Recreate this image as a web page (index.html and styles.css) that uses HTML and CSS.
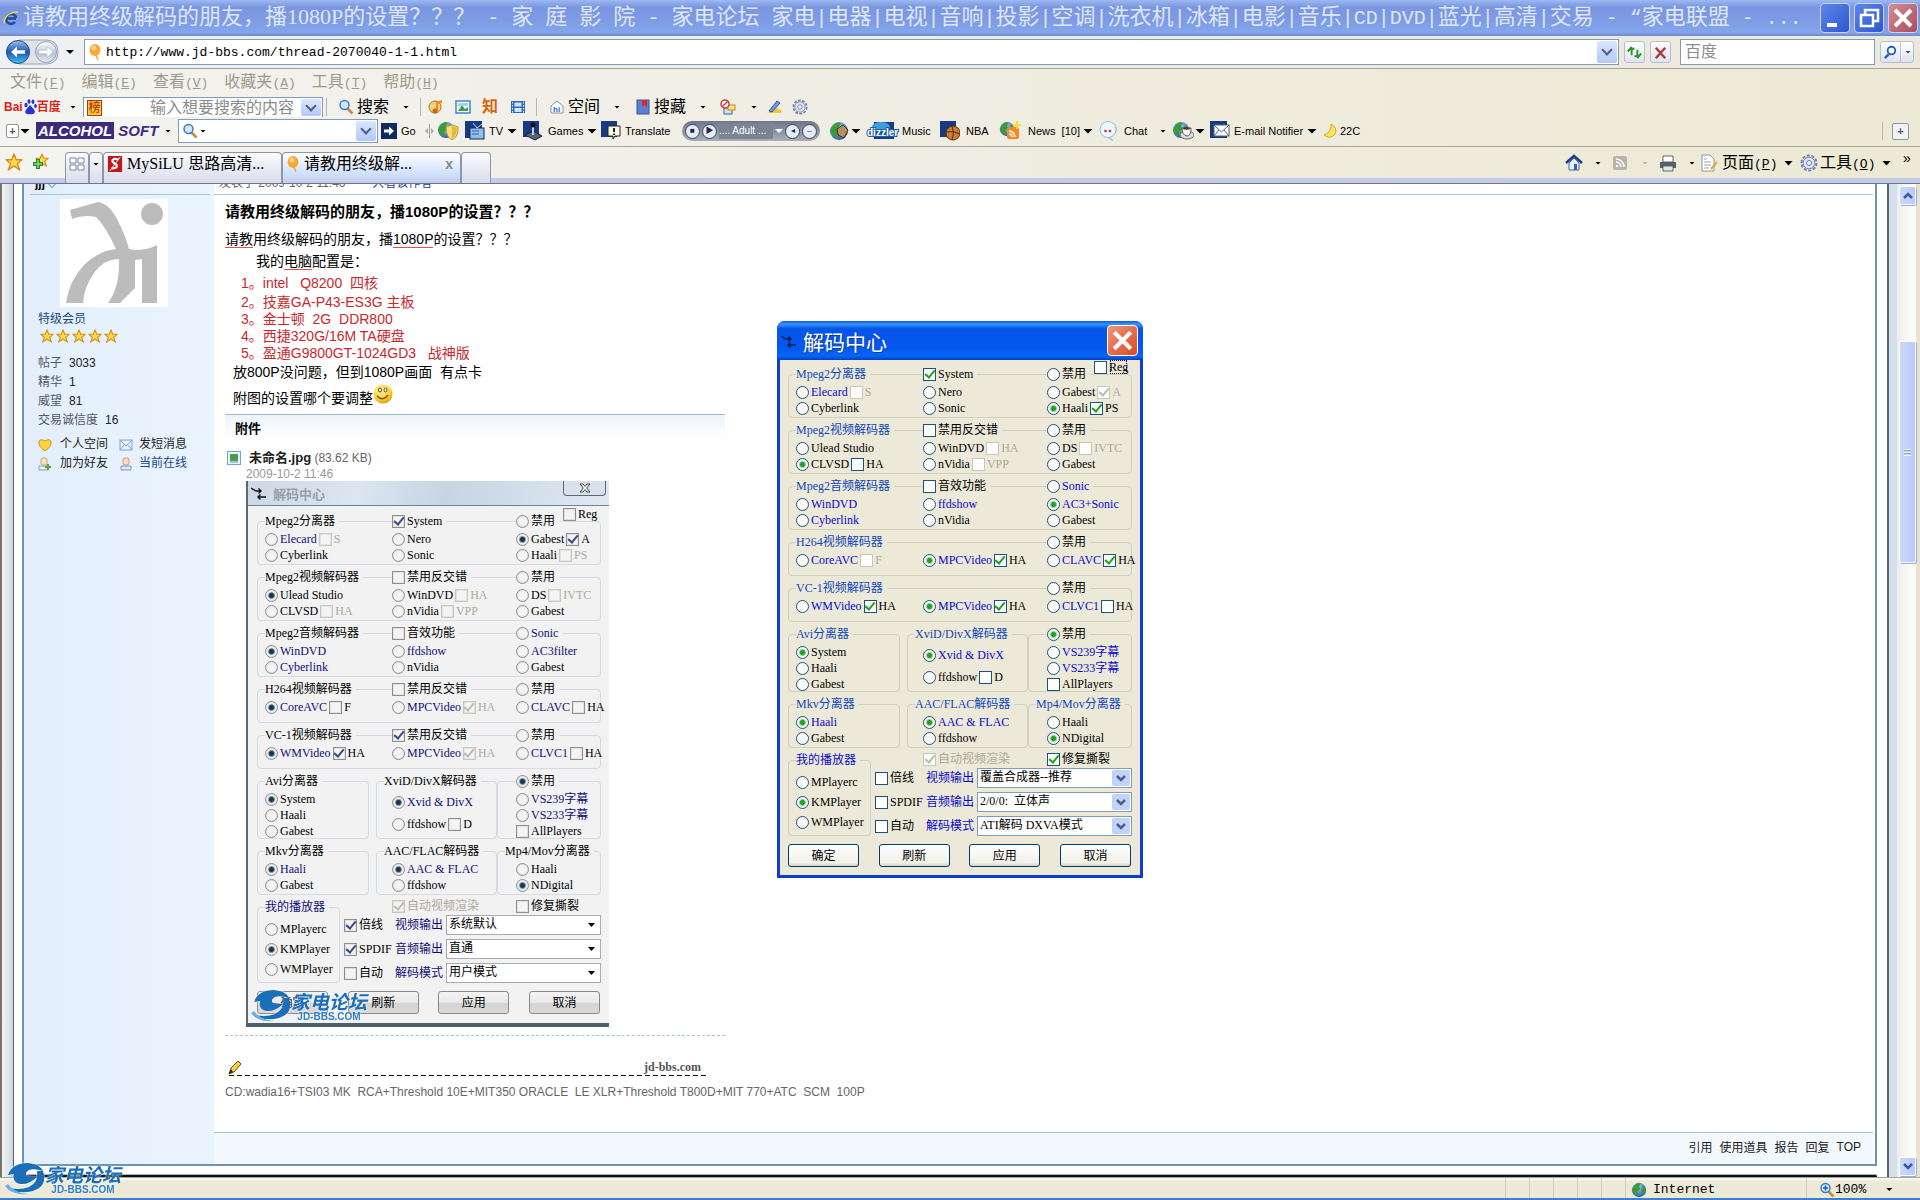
FILE: index.html
```html
<!DOCTYPE html>
<html lang="zh-CN">
<head>
<meta charset="utf-8">
<title>请教用终级解码的朋友，播1080P的设置？？？</title>
<link rel="stylesheet" href="styles.css">
</head>
<body>
<svg class="defs" aria-hidden="true">
  <defs>
    <linearGradient id="gBack" x1="0" y1="0" x2="0" y2="1"><stop offset="0" stop-color="#9cc0ee"/><stop offset=".5" stop-color="#1d55b4"/><stop offset="1" stop-color="#3fc4f6"/></linearGradient>
    <linearGradient id="gFwd" x1="0" y1="0" x2="0" y2="1"><stop offset="0" stop-color="#fff"/><stop offset=".6" stop-color="#b9c4d2"/><stop offset="1" stop-color="#e6eef6"/></linearGradient>
    <radialGradient id="gBall" cx=".4" cy=".3" r=".8"><stop offset="0" stop-color="#fff3a0"/><stop offset=".6" stop-color="#ffd22e"/><stop offset="1" stop-color="#c98a08"/></radialGradient>
    <radialGradient id="gGlobe" cx=".4" cy=".3" r=".8"><stop offset="0" stop-color="#9fd4ff"/><stop offset="1" stop-color="#1c4f9c"/></radialGradient>
    <symbol id="globe" viewBox="0 0 20 20"><circle cx="10" cy="10" r="9" fill="url(#gGlobe)"/><path d="M3 6Q7 0 12 2L10 6L12 9L8 12L9 17Q3 16 1 10Z" fill="#3d9a3a"/><path d="M14 5L18 7L18 13L15 15L13 10Z" fill="#3d9a3a"/></symbol>
    <symbol id="star" viewBox="0 0 16 16"><path d="M8 1L10 6L15 6L11 9.500L13 15L8 11.500L3 15L5 9.500L1 6L6 6Z" fill="#ffdc4a" stroke="#d98f12" stroke-width="1.300" stroke-linejoin="round"/></symbol>
    <symbol id="lens" viewBox="0 0 16 16"><path d="M9 9L14.500 14.500" stroke="#c98a3a" stroke-width="2.600"/><circle cx="6.500" cy="6" r="4.500" fill="#cfe8fb" stroke="#3a7cc0" stroke-width="1.500"/></symbol>
    <symbol id="gear" viewBox="0 0 18 18"><circle cx="9" cy="9" r="7.500" fill="none" stroke="#6f7fae" stroke-width="2" stroke-dasharray="3 1.700"/><circle cx="9" cy="9" r="5.800" fill="#dfe5f4" stroke="#7c8ab4"/><circle cx="9" cy="9" r="2.500" fill="#f4f2ea" stroke="#6f7fae"/></symbol>
    <symbol id="balloon" viewBox="0 0 14 18"><ellipse cx="7" cy="7" rx="5.500" ry="6" fill="#f7a834"/><ellipse cx="6" cy="5" rx="2.500" ry="2.500" fill="#ffd487"/><path d="M8 12L10 17" stroke="#f7a834" stroke-width="1.500"/></symbol>
    <symbol id="arrows" viewBox="0 0 16 14"><path d="M0 2L5 5L10 5M7.500 2.500L10 5L7.500 7.500M15 11L7 11M9.500 8.500L7 11L9.500 13.500" fill="none" stroke="currentColor" stroke-width="1.400"/></symbol>
    <symbol id="jdlogo" viewBox="0 0 120 34"><path d="M4 13Q8 1 24 1Q36 2 39 9Q30 6 25 8Q20 11 23 14L33 15Q25 23 16 22Q8 20 10 12Z" fill="#1b6eb8"/><path d="M39 9Q44 24 29 29Q14 33 2 25Q14 29 25 25Q35 20 33 9Z" fill="#1b6eb8"/><path d="M1 24Q8 34 24 32Q10 31 4 22Z" fill="#6db0e2"/></symbol>
  </defs>
</svg>

<header class="titlebar">
  <svg class="i16" viewBox="0 0 16 16"><path d="M13 8A5 5 0 1 0 12 12M4 8.500L13 8.500" fill="none" stroke="#1d4f98" stroke-width="2.600"/><path d="M1 13Q2 2 15 2" fill="none" stroke="#f3cf55" stroke-width="1.600"/></svg>
  <h1>请教用终级解码的朋友，播1080P的设置？？？<b> - </b>家<b> </b>庭<b> </b>影<b> </b>院<b> - </b>家电论坛<b> </b>家电<b>|</b>电器<b>|</b>电视<b>|</b>音响<b>|</b>投影<b>|</b>空调<b>|</b>洗衣机<b>|</b>冰箱<b>|</b>电影<b>|</b>音乐<b>|CD|DVD|</b>蓝光<b>|</b>高清<b>|</b>交易<b> - “</b>家电联盟<b> - ...</b></h1>
  <div class="winbtns">
    <button aria-label="最小化"><svg viewBox="0 0 28 28"><path d="M6 21H16" stroke="#fff" stroke-width="4"/></svg></button>
    <button aria-label="还原"><svg viewBox="0 0 28 28"><path d="M10 10V6H23V17H19" fill="none" stroke="#fff" stroke-width="2.500"/><rect x="6" y="11" width="12" height="11" fill="none" stroke="#fff" stroke-width="2.500"/></svg></button>
    <button class="red" aria-label="关闭"><svg viewBox="0 0 28 28"><path d="M6 6L22 22M22 6L6 22" stroke="#fff" stroke-width="4"/></svg></button>
  </div>
</header>

<div class="address">
  <svg class="nav" viewBox="0 0 54 26"><path d="M14 1H42Q53 2 53 13T42 25H14" fill="#dfe3e8" stroke="#9aa4b4"/><circle cx="13" cy="13" r="11.500" fill="url(#gBack)" stroke="#24477e"/><circle cx="41" cy="13" r="10.500" fill="url(#gFwd)" stroke="#98a5b8"/><path d="M6 13L12 7.500V11.300H20V14.700H12V18.500Z" fill="#fff"/><path d="M48 13L42 7.500V11.300H34V14.700H42V18.500Z" fill="#fff" stroke="#aeb8c6" stroke-width=".6"/></svg>
  <i class="tri"></i>
  <div class="field url"><svg class="ball" viewBox="0 0 14 18"><use href="#balloon"/></svg><input aria-label="地址" value="http://www.jd-bbs.com/thread-2070040-1-1.html"><i class="drop"></i></div>
  <button class="sq" aria-label="刷新"><svg viewBox="0 0 20 20"><path d="M7 13V5M3 9L7 4M7 6H10M13 7V15M17 11L13 16M13 14H10" fill="none" stroke="#2f8f2b" stroke-width="2"/></svg></button>
  <button class="sq" aria-label="停止"><svg viewBox="0 0 20 20"><path d="M5 5L15 16M15 5L5 16" stroke="#b83232" stroke-width="2.400"/></svg></button>
  <div class="field find"><input aria-label="搜索" placeholder="百度"></div>
  <button class="sq go" aria-label="搜索"><svg viewBox="0 0 20 20"><path d="M4 16L8 12" stroke="#2a5cc4" stroke-width="2.500"/><circle cx="11" cy="8" r="4" fill="#fff" stroke="#2a5cc4" stroke-width="2"/></svg><i class="tri s"></i></button>
</div>

<div class="bars">
  <nav class="menu"><a href="#">文件<b>(<u>F</u>)</b></a><a href="#">编辑<b>(<u>E</u>)</b></a><a href="#">查看<b>(<u>V</u>)</b></a><a href="#">收藏夹<b>(<u>A</u>)</b></a><a href="#">工具<b>(<u>T</u>)</b></a><a href="#">帮助<b>(<u>H</u>)</b></a></nav>
  <div class="baidu">
    <span class="bdlogo">Bai<svg viewBox="0 0 14 16"><ellipse cx="3" cy="6" rx="1.600" ry="2.200"/><ellipse cx="6" cy="2.500" rx="1.500" ry="2.200"/><ellipse cx="10" cy="2.800" rx="1.500" ry="2.200"/><ellipse cx="12.500" cy="7" rx="1.400" ry="2.100"/><path d="M7 6Q12 11 12 13Q11 16 7 15Q3 16 2 13Q3 10 7 6Z"/></svg>百度</span>
    <i class="tri s"></i>
    <div class="field"><span class="bang">榜</span><input aria-label="百度搜索" placeholder="输入想要搜索的内容"><i class="drop"></i></div>
    <i class="vsep"></i>
    <svg class="i16" viewBox="0 0 16 16"><use href="#lens"/></svg><span>搜索</span><i class="tri s"></i><i class="vsep"></i>
    <svg class="i16" viewBox="0 0 16 16"><circle cx="7" cy="8" r="6" fill="#f5d27a" stroke="#b0731a"/><path d="M8 12V3L14 1V4L10 5V12Z" fill="#e8902a"/><circle cx="7" cy="12" r="2.500" fill="#c46a12"/></svg>
    <svg class="i16" viewBox="0 0 16 16"><rect x="1" y="2" width="14" height="12" fill="#fff" stroke="#3d86c6" stroke-width="1.500"/><path d="M3 12L7 6L10 10L13 8V12Z" fill="#3fa04a"/><path d="M3 4H13V7H3Z" fill="#9fd0f6"/></svg>
    <span class="zhi">知</span>
    <svg class="i16" viewBox="0 0 16 16"><rect x="1" y="2" width="14" height="12" fill="#2a66c4"/><path d="M4.500 3.500H11.500V7.500H4.500ZM4.500 9H11.500V13H4.500Z" fill="#cfe4fb"/><path d="M2.500 3V14M13.500 3V14" stroke="#fff" stroke-dasharray="1.500 1.500"/></svg>
    <i class="vsep"></i>
    <svg class="i16" viewBox="0 0 16 16"><path d="M2 7L8 2L14 7V14H2Z" fill="#fff" stroke="#8a97a8"/><text x="4" y="13" font-size="8" font-weight="bold" fill="#2a66c4">hi</text></svg><span>空间</span><i class="tri s"></i>
    <svg class="i16" viewBox="0 0 16 16"><rect x="1" y="1" width="12" height="14" fill="#5f7fd6" stroke="#3a559c"/><path d="M6 1H11V8L8.500 6L6 8Z" fill="#d03030"/></svg><span>搜藏</span><i class="tri s"></i>
    <svg class="i16" viewBox="0 0 16 16"><rect x="4" y="9" width="8" height="6" fill="#cfe0f8" stroke="#39679f"/><rect x="8" y="6" width="7" height="5" fill="#ffe07a" stroke="#b98a1c"/><circle cx="5" cy="5" r="4" fill="#fff" stroke="#d23a3a" stroke-width="1.500"/><path d="M2 8L8 2" stroke="#d23a3a" stroke-width="1.500"/></svg><i class="tri s"></i>
    <svg class="i16" viewBox="0 0 16 16"><path d="M1 14H15V11L10 9Z" fill="#f6c52e"/><path d="M3 12L11 2L14 4L6 13Z" fill="#6f9be8" stroke="#2d529c"/></svg>
    <svg class="i16" viewBox="0 0 18 18"><use href="#gear"/></svg>
  </div>
  <div class="alcohol">
    <span class="plus">+</span><i class="tri"></i>
    <span class="alc"><em>ALCOHOL</em> SOFT</span><i class="tri s"></i>
    <div class="field"><svg class="i16" viewBox="0 0 16 16"><use href="#lens"/></svg><i class="tri s"></i><input aria-label="Alcohol 搜索"><i class="drop"></i></div>
    <svg class="i16" viewBox="0 0 16 16"><rect width="16" height="16" fill="#10295f"/><path d="M3 6.500H8V3.500L13 8L8 12.500V9.500H3Z" fill="#fff"/></svg><span>Go</span>
    <svg class="i9" viewBox="0 0 9 16"><path d="M4.500 1V15" stroke="#999"/><path d="M3 5L0 8L3 11ZM6 5L9 8L6 11Z" fill="#aaa"/></svg>
    <svg class="i22" viewBox="0 0 22 20"><use href="#globe" width="18" height="18"/><path d="M9 6L15 4L21 6Q22 15 15 19Q9 16 9 6Z" fill="#f6dd7c" stroke="#c49a2c"/><path d="M15 5V18Q20 14 20 7Z" fill="#e2b93c"/></svg>
    <svg class="i20" viewBox="0 0 20 20"><rect width="17" height="17" fill="#173a82"/><rect x="5" y="7" width="14" height="11" fill="#8fc0ea" stroke="#225"/><path d="M8 2L12 7L17 3" fill="none" stroke="#cde"/><path d="M7 10H14M7 13H14" stroke="#2e62a6"/></svg><span>TV</span><i class="tri"></i>
    <svg class="i20" viewBox="0 0 20 20"><rect width="16" height="16" fill="#173a82"/><path d="M2 14L10 10L19 15L12 19Z" fill="#567" stroke="#223"/><path d="M10 14V5" stroke="#ccd" stroke-width="2"/><circle cx="10" cy="4" r="2.500" fill="#111"/></svg><span>Games</span><i class="tri"></i>
    <svg class="i20" viewBox="0 0 20 20"><rect width="16" height="16" fill="#173a82"/><path d="M7 5H19V15H14L12 18V15H7Z" fill="#fffbe0" stroke="#222"/><path d="M13 7V11M13 12.500V14" stroke="#222" stroke-width="2"/></svg><span>Translate</span>
    <div class="player"><button aria-label="停止">■</button><button aria-label="播放">▶</button><span>.... Adult ...</span><i class="tri w"></i><button aria-label="音量">◂</button><button aria-label="静音">–</button></div>
    <svg class="i20" viewBox="0 0 20 20"><use href="#globe"/><path d="M8 8L14 4L19 9L15 17L9 14Z" fill="#b98f62" stroke="#412d1a"/></svg><i class="tri"></i>
    <svg class="diz" viewBox="0 0 36 20"><rect x="8" y="1" width="20" height="17" fill="#173a82"/><ellipse cx="15" cy="6" rx="9" ry="5" fill="#3d9fe0"/><text x="1" y="15" font-size="10" font-weight="bold" fill="#fff" stroke="#1a5faa" stroke-width="2" paint-order="stroke">dizzler</text></svg><span>Music</span>
    <svg class="i20" viewBox="0 0 20 20"><rect width="16" height="16" fill="#173a82"/><circle cx="13" cy="12" r="7" fill="#c97c34" stroke="#5a3010"/><path d="M6 11Q13 9 20 13M12 5Q15 12 12 19" fill="none" stroke="#5a3010"/></svg><span>NBA</span>
    <svg class="i22" viewBox="0 0 22 20"><use href="#globe" width="16" height="16"/><rect x="8" y="6" width="12" height="12" rx="2" fill="#f08a24"/><path d="M10 10A6 6 0 0 1 16 16M10 13A3 3 0 0 1 13 16" fill="none" stroke="#fff" stroke-width="1.500"/><path d="M18 0V8M14 4H22" stroke="#f5dc2c" stroke-width="2"/></svg><span>News &nbsp;[10]</span><i class="tri"></i>
    <svg class="i20" viewBox="0 0 20 20"><path d="M10 1A9 7.500 0 1 1 9 16L15 20L12 16A9 8 0 0 1 10 1Z" fill="#eef7fb" stroke="#9ac0cf"/><circle cx="10" cy="8.500" r="8" fill="#eef7fb" stroke="#9ac0cf"/><circle cx="7.500" cy="10" r="1.300" fill="#c33"/><circle cx="12" cy="10" r="1.300" fill="#c33"/></svg><span>Chat</span><i class="tri s"></i>
    <svg class="i22" viewBox="0 0 22 20"><use href="#globe" width="18" height="18"/><ellipse cx="15" cy="14" rx="7" ry="4" fill="#ddd" stroke="#666"/><path d="M10 7H19Q19 15 15 15Q10 14 10 7Z" fill="#fff" stroke="#555"/><ellipse cx="14.500" cy="7.500" rx="3.500" ry="1.200" fill="#5b3516"/></svg><i class="tri"></i>
    <svg class="i20" viewBox="0 0 20 20"><rect width="17" height="17" fill="#173a82"/><rect x="4" y="4" width="15" height="11" fill="#fff" stroke="#567"/><path d="M4 4L11.500 11L19 4M4 15L9 9M19 15L14 9" fill="none" stroke="#567"/></svg><span>E-mail Notifier</span><i class="tri"></i>
    <svg class="i16" viewBox="0 0 16 16"><path d="M9 1Q10 9 2 12Q8 17 13 11Q16 5 9 1Z" fill="#ffe45c" stroke="#cfa92a"/></svg><span>22C</span>
    <i class="vsep last"></i><span class="plus big">+</span>
  </div>
</div>

<div class="tabs">
  <svg class="i18" viewBox="0 0 16 16"><use href="#star"/></svg>
  <svg class="i18" viewBox="0 0 18 18"><use href="#star" x="3" width="14" height="14"/><path d="M6 6V16M1 11H11" stroke="#1f8a1f" stroke-width="4"/><path d="M6 7V15M2 11H10" stroke="#8ee07a" stroke-width="1.500"/></svg>
  <div class="strip">
    <button class="tab quick" aria-label="快速导航选项卡"><svg viewBox="0 0 16 14"><path d="M1 1H7V6H1ZM9 1H15V6H9ZM1 8H7V13H1ZM9 8H15V13H9Z" fill="#fff" stroke="#7c86a0"/></svg></button>
    <button class="tab mini" aria-label="选项卡列表"><i class="tri s"></i></button>
    <button class="tab page"><svg class="i16" viewBox="0 0 16 18"><rect width="16" height="18" fill="#c01818"/><path d="M12 4Q5 2 5 6Q6 8 10 10Q11 14 4 14" fill="none" stroke="#fff" stroke-width="2.500"/><path d="M2 17L14 1" stroke="#fff"/></svg><span><b>MySiLU</b> 思路高清<b>...</b></span></button>
    <button class="tab page on"><svg class="ball" viewBox="0 0 14 18"><use href="#balloon"/></svg><span>请教用终级解<b>...</b></span><strong>x</strong></button>
    <button class="tab new" aria-label="新选项卡"></button>
  </div>
  <div class="cmds">
    <svg class="i18" viewBox="0 0 18 18"><path d="M1 9L9 2L17 9" fill="none" stroke="#1d3f86" stroke-width="2.500"/><path d="M4 9V16H14V9L9 4Z" fill="#e8f0fb" stroke="#4468a6"/><rect x="9" y="10" width="3" height="6" fill="#3a62b0"/></svg><i class="tri s"></i>
    <svg class="i16" viewBox="0 0 16 16"><rect x="1" y="1" width="14" height="14" rx="2" fill="#b5b3aa"/><path d="M4 7A5 5 0 0 1 9 12M4 4A8 8 0 0 1 12 12" fill="none" stroke="#fff" stroke-width="1.500"/><circle cx="5" cy="11" r="1.300" fill="#fff"/></svg><i class="tri s dim"></i>
    <svg class="i18" viewBox="0 0 18 18"><path d="M4 2H14V8H4Z" fill="#fff" stroke="#666"/><path d="M1 8H17V14H1Z" fill="#555f6c"/><path d="M4 12H14V17H4Z" fill="#dfe6ee" stroke="#666"/></svg><i class="tri s"></i>
    <svg class="i18" viewBox="0 0 18 18"><path d="M2 1H10L14 5V17H2Z" fill="#fff" stroke="#8a94a6"/><path d="M4 8H11M4 11H11M4 14H9M4 5H7" stroke="#9aa6bc"/><path d="M11 15L17 8" stroke="#e0a838" stroke-width="2"/></svg><span>页面<b>(<u>P</u>)</b></span><i class="tri"></i>
    <svg class="i18" viewBox="0 0 18 18"><use href="#gear"/></svg><span>工具<b>(<u>O</u>)</b></span><i class="tri"></i><span class="more">»</span>
  </div>
</div>

<main class="pane">
  <div class="sheet">
    <article class="post">
      <aside class="user">
        <div class="cut">jjj<i></i></div>
        <svg class="avatar" viewBox="0 0 108 108"><rect width="108" height="108" fill="#fff"/><g fill="#bcbcbc"><circle cx="92" cy="15" r="11"/><path d="M10 11L38 3Q50 5 58 22Q66 38 69 50Q84 53 97 46V104H82V60L75 61V89L60 104H48Q60 88 59 60Q44 60 34 74Q24 88 23 104H6Q9 82 24 66Q38 52 56 50Q46 28 36 18Q24 15 12 20Z"/></g></svg>
        <a class="rank" href="#">特级会员</a>
        <div class="stars"><svg viewBox="0 0 16 16"><use href="#star"/></svg><svg viewBox="0 0 16 16"><use href="#star"/></svg><svg viewBox="0 0 16 16"><use href="#star"/></svg><svg viewBox="0 0 16 16"><use href="#star"/></svg><svg viewBox="0 0 16 16"><use href="#star"/></svg></div>
        <dl><div><dt>帖子</dt><dd>3033</dd></div><div><dt>精华</dt><dd>1</dd></div><div><dt>威望</dt><dd>81</dd></div><div><dt>交易诚信度</dt><dd>16</dd></div></dl>
        <div class="links">
          <svg viewBox="0 0 14 14"><path d="M7 13Q0 8 1 4Q2 0 7 3Q12 0 13 4Q14 8 7 13Z" fill="#ffd23e" stroke="#c9912a"/></svg><a href="#">个人空间</a>
          <svg viewBox="0 0 14 14"><rect x="1" y="2" width="12" height="10" fill="#eaf3fd" stroke="#7da3d6"/><path d="M1 2L7 8L13 2M1 12L5 7M13 12L9 7" fill="none" stroke="#7da3d6"/></svg><a href="#">发短消息</a>
          <svg viewBox="0 0 14 14"><rect x="3" y="1" width="6" height="7" rx="2" fill="#fbe3c8" stroke="#c9a27c"/><path d="M1 13V9H10V13Z" fill="#e6eef6" stroke="#8aa0b8"/><path d="M10 7V13M7 10H13" stroke="#5aa23c" stroke-width="2"/></svg><a href="#">加为好友</a>
          <svg viewBox="0 0 14 14"><rect x="4" y="1" width="6" height="7" rx="2" fill="#fbdcc0" stroke="#d09a78"/><path d="M2 13V9H12V13Z" fill="#dfe9f6" stroke="#7d98c0"/></svg><a class="online" href="#">当前在线</a>
        </div>
      </aside>
      <section class="main">
        <div class="cut">发表于 2009-10-2 11:46 &nbsp;<a href="#">只看该作者</a></div>
        <div class="text">
          <h2>请教用终级解码的朋友，播1080P的设置？？？</h2>
          <p><u>请教</u>用终级解码的朋友，播<u>1080P</u>的设置？？？</p>
          <p class="in">我的<u>电脑</u>配置是：</p>
          <ul>
            <li>1。intel &nbsp; Q8200 &nbsp;四核</li>
            <li>2。技嘉GA-P43-ES3G 主板</li>
            <li>3。金士顿 &nbsp;2G &nbsp;DDR800</li>
            <li>4。西捷320G/16M TA硬盘</li>
            <li>5。盈通G9800GT-1024GD3 &nbsp; 战神版</li>
          </ul>
          <p class="tail">放800P没问题，但到1080P画面 &nbsp;有点卡</p>
          <p class="tail smile">附图的设置哪个要调整<svg viewBox="0 0 20 20"><circle cx="10" cy="10" r="9.500" fill="url(#gBall)"/><ellipse cx="7" cy="6" rx="1.500" ry="2" fill="#fff" stroke="#543"/><ellipse cx="12.500" cy="6" rx="1.500" ry="2" fill="#fff" stroke="#543"/><path d="M4 12Q10 18 15 11" fill="none" stroke="#7a4a08" stroke-width="1.300"/></svg></p>
          <h3>附件</h3>
          <div class="file"><svg viewBox="0 0 14 14"><rect x=".5" y=".5" width="13" height="13" fill="#e8f4fa" stroke="#6fa8c8"/><rect x="3" y="3" width="8" height="7" fill="#4c9a4c"/><path d="M3 10H11V12H3Z" fill="#9ac8e0"/></svg><span><strong>未命名.jpg</strong> (83.62 KB)</span></div>
          <div class="date">2009-10-2 11:46</div>

          <div class="dlg vista">
            <div class="cap"><svg class="ar" viewBox="0 0 16 14"><use href="#arrows"/></svg><span>解码中心</span><button type="button" aria-label="关闭"><svg viewBox="0 0 12 10"><path d="M1 1H4L6 3.500L8 1H11L7.700 5L11 9H8L6 6.500L4 9H1L4.300 5Z" fill="#fff" stroke="#444"/></svg></button></div>
            <form class="form">
              <label class="o reg"><input type="checkbox">Reg</label>
              <div class="grp" role="group" aria-label="Mpeg2分离器">
                <span class="lg">Mpeg2分离器</span><label class="o h"><input type="checkbox" checked>System</label><label class="o h"><input type="radio" name="a1">禁用</label>
                <div class="r"><label class="o k"><input type="radio" name="a1">Elecard</label><label class="o"><input type="checkbox" disabled>S</label></div><label class="o"><input type="radio" name="a1">Nero</label><div class="r"><label class="o"><input type="radio" name="a1" checked>Gabest</label><label class="o"><input type="checkbox" checked>A</label></div>
                <label class="o"><input type="radio" name="a1">Cyberlink</label><label class="o"><input type="radio" name="a1">Sonic</label><div class="r"><label class="o"><input type="radio" name="a1">Haali</label><label class="o"><input type="checkbox" disabled>PS</label></div>
              </div>
              <div class="grp" role="group" aria-label="Mpeg2视频解码器">
                <span class="lg">Mpeg2视频解码器</span><label class="o h"><input type="checkbox">禁用反交错</label><label class="o h"><input type="radio" name="a2">禁用</label>
                <label class="o"><input type="radio" name="a2" checked>Ulead Studio</label><div class="r"><label class="o"><input type="radio" name="a2">WinDVD</label><label class="o"><input type="checkbox" disabled>HA</label></div><div class="r"><label class="o"><input type="radio" name="a2">DS</label><label class="o"><input type="checkbox" disabled>IVTC</label></div>
                <div class="r"><label class="o"><input type="radio" name="a2">CLVSD</label><label class="o"><input type="checkbox" disabled>HA</label></div><div class="r"><label class="o"><input type="radio" name="a2">nVidia</label><label class="o"><input type="checkbox" disabled>VPP</label></div><label class="o"><input type="radio" name="a2">Gabest</label>
              </div>
              <div class="grp" role="group" aria-label="Mpeg2音频解码器">
                <span class="lg">Mpeg2音频解码器</span><label class="o h"><input type="checkbox">音效功能</label><label class="o h k"><input type="radio" name="a3">Sonic</label>
                <label class="o k"><input type="radio" name="a3" checked>WinDVD</label><label class="o k"><input type="radio" name="a3">ffdshow</label><label class="o k"><input type="radio" name="a3">AC3filter</label>
                <label class="o k"><input type="radio" name="a3">Cyberlink</label><label class="o"><input type="radio" name="a3">nVidia</label><label class="o"><input type="radio" name="a3">Gabest</label>
              </div>
              <div class="grp short" role="group" aria-label="H264视频解码器">
                <span class="lg">H264视频解码器</span><label class="o h"><input type="checkbox">禁用反交错</label><label class="o h"><input type="radio" name="a4">禁用</label>
                <div class="r"><label class="o k"><input type="radio" name="a4" checked>CoreAVC</label><label class="o"><input type="checkbox">F</label></div><div class="r"><label class="o k"><input type="radio" name="a4">MPCVideo</label><label class="o"><input type="checkbox" checked disabled>HA</label></div><div class="r"><label class="o k"><input type="radio" name="a4">CLAVC</label><label class="o"><input type="checkbox">HA</label></div>
              </div>
              <div class="grp short" role="group" aria-label="VC-1视频解码器">
                <span class="lg">VC-1视频解码器</span><label class="o h"><input type="checkbox" checked>禁用反交错</label><label class="o h"><input type="radio" name="a5">禁用</label>
                <div class="r"><label class="o k"><input type="radio" name="a5" checked>WMVideo</label><label class="o"><input type="checkbox" checked>HA</label></div><div class="r"><label class="o k"><input type="radio" name="a5">MPCVideo</label><label class="o"><input type="checkbox" checked disabled>HA</label></div><div class="r"><label class="o k"><input type="radio" name="a5">CLVC1</label><label class="o"><input type="checkbox">HA</label></div>
              </div>
              <div class="split tall">
                <div class="box" role="group" aria-label="Avi分离器"><span class="lg">Avi分离器</span><label class="o"><input type="radio" name="a6" checked>System</label><label class="o"><input type="radio" name="a6">Haali</label><label class="o"><input type="radio" name="a6">Gabest</label></div>
                <div class="box mid loose" role="group" aria-label="XviD/DivX解码器"><span class="lg">XviD/DivX解码器</span><label class="o k"><input type="radio" name="a7" checked>Xvid &amp; DivX</label><div class="r"><label class="o"><input type="radio" name="a7">ffdshow</label><label class="o"><input type="checkbox">D</label></div></div>
                <div class="box end" role="group" aria-label="字幕"><label class="o h"><input type="radio" name="a8" checked>禁用</label><label class="o k"><input type="radio" name="a8">VS239字幕</label><label class="o k"><input type="radio" name="a8">VS233字幕</label><label class="o"><input type="checkbox">AllPlayers</label></div>
              </div>
              <div class="split">
                <div class="box" role="group" aria-label="Mkv分离器"><span class="lg">Mkv分离器</span><label class="o k"><input type="radio" name="a9" checked>Haali</label><label class="o"><input type="radio" name="a9">Gabest</label></div>
                <div class="box mid" role="group" aria-label="AAC/FLAC解码器"><span class="lg">AAC/FLAC解码器</span><label class="o k"><input type="radio" name="a10" checked>AAC &amp; FLAC</label><label class="o"><input type="radio" name="a10">ffdshow</label></div>
                <div class="box end" role="group" aria-label="Mp4/Mov分离器"><span class="lg">Mp4/Mov分离器</span><label class="o"><input type="radio" name="a11">Haali</label><label class="o"><input type="radio" name="a11" checked>NDigital</label></div>
              </div>
              <div class="low">
                <div class="box pl" role="group" aria-label="我的播放器"><span class="lg k">我的播放器</span><label class="o"><input type="radio" name="a12">MPlayerc</label><label class="o"><input type="radio" name="a12" checked>KMPlayer</label><label class="o"><input type="radio" name="a12">WMPlayer</label></div>
                <div class="outs">
                  <div class="top"><label class="o"><input type="checkbox" checked disabled>自动视频渲染</label><label class="o"><input type="checkbox">修复撕裂</label></div>
                  <label class="o"><input type="checkbox" checked>倍线</label><label class="k" for="v1">视频输出</label><select id="v1"><option>系统默认</option></select>
                  <label class="o"><input type="checkbox" checked>SPDIF</label><label class="k" for="v2">音频输出</label><select id="v2"><option>直通</option></select>
                  <label class="o"><input type="checkbox">自动</label><label class="k" for="v3">解码模式</label><select id="v3"><option>用户模式</option></select>
                </div>
              </div>
              <div class="btns"><button type="button">确定</button><button type="button">刷新</button><button type="button">应用</button><button type="button">取消</button></div>
            </form>
            <div class="edge"></div>
            <div class="mark"><svg viewBox="0 0 44 34"><use href="#jdlogo" width="120" height="34"/></svg><span>家电论坛<small>JD-BBS.COM</small></span></div>
          </div>

          <div class="rule"></div>
          <div class="sig"><svg viewBox="0 0 16 16"><path d="M2 14L4 8L11 1L14 4L7 12Z" fill="#f3d24a" stroke="#6b4a10"/><path d="M2 14L4 9L6 12Z" fill="#222"/></svg><span>jd-bbs.com</span></div>
          <p class="gear">CD:wadia16+TSI03 MK &nbsp;RCA+Threshold 10E+MIT350 ORACLE &nbsp;LE XLR+Threshold T800D+MIT 770+ATC &nbsp;SCM &nbsp;100P</p>
        </div>
        <footer><a href="#">引用</a><a href="#">使用道具</a><a href="#">报告</a><a href="#">回复</a><a href="#">TOP</a></footer>
      </section>
    </article>
    <div class="next"></div>
  </div>
  <div class="gut"></div>
  <div class="scroll"><button aria-label="向上滚动"><svg viewBox="0 0 10 7"><path d="M1 6L5 2L9 6" fill="none" stroke="#3f5a9a" stroke-width="2.500"/></svg></button><div class="thumb"></div><button aria-label="向下滚动"><svg viewBox="0 0 10 7"><path d="M1 1L5 5L9 1" fill="none" stroke="#3f5a9a" stroke-width="2.500"/></svg></button></div>

  <div class="dlg xp">
    <div class="cap"><svg class="ar" viewBox="0 0 16 14"><use href="#arrows"/></svg><span>解码中心</span><button type="button" aria-label="关闭"><svg viewBox="0 0 28 28"><path d="M6 6L22 22M22 6L6 22" stroke="#fff" stroke-width="4"/></svg></button></div>
    <form class="form">
      <label class="o reg"><input type="checkbox"><span>Reg</span></label>
      <div class="grp" role="group" aria-label="Mpeg2分离器">
        <span class="lg">Mpeg2分离器</span><label class="o h"><input type="checkbox" checked>System</label><label class="o h"><input type="radio" name="b1">禁用</label>
        <div class="r"><label class="o k"><input type="radio" name="b1">Elecard</label><label class="o"><input type="checkbox" disabled>S</label></div><label class="o"><input type="radio" name="b1">Nero</label><div class="r"><label class="o"><input type="radio" name="b1">Gabest</label><label class="o"><input type="checkbox" checked disabled>A</label></div>
        <label class="o"><input type="radio" name="b1">Cyberlink</label><label class="o"><input type="radio" name="b1">Sonic</label><div class="r"><label class="o"><input type="radio" name="b1" checked>Haali</label><label class="o"><input type="checkbox" checked>PS</label></div>
      </div>
      <div class="grp" role="group" aria-label="Mpeg2视频解码器">
        <span class="lg">Mpeg2视频解码器</span><label class="o h"><input type="checkbox">禁用反交错</label><label class="o h"><input type="radio" name="b2">禁用</label>
        <label class="o"><input type="radio" name="b2">Ulead Studio</label><div class="r"><label class="o"><input type="radio" name="b2">WinDVD</label><label class="o"><input type="checkbox" disabled>HA</label></div><div class="r"><label class="o"><input type="radio" name="b2">DS</label><label class="o"><input type="checkbox" disabled>IVTC</label></div>
        <div class="r"><label class="o"><input type="radio" name="b2" checked>CLVSD</label><label class="o"><input type="checkbox">HA</label></div><div class="r"><label class="o"><input type="radio" name="b2">nVidia</label><label class="o"><input type="checkbox" disabled>VPP</label></div><label class="o"><input type="radio" name="b2">Gabest</label>
      </div>
      <div class="grp" role="group" aria-label="Mpeg2音频解码器">
        <span class="lg">Mpeg2音频解码器</span><label class="o h"><input type="checkbox">音效功能</label><label class="o h k"><input type="radio" name="b3">Sonic</label>
        <label class="o k"><input type="radio" name="b3">WinDVD</label><label class="o k"><input type="radio" name="b3">ffdshow</label><label class="o k"><input type="radio" name="b3" checked>AC3+Sonic</label>
        <label class="o k"><input type="radio" name="b3">Cyberlink</label><label class="o"><input type="radio" name="b3">nVidia</label><label class="o"><input type="radio" name="b3">Gabest</label>
      </div>
      <div class="grp short" role="group" aria-label="H264视频解码器">
        <span class="lg">H264视频解码器</span><span></span><label class="o h"><input type="radio" name="b4">禁用</label>
        <div class="r"><label class="o k"><input type="radio" name="b4">CoreAVC</label><label class="o"><input type="checkbox" disabled>F</label></div><div class="r"><label class="o k"><input type="radio" name="b4" checked>MPCVideo</label><label class="o"><input type="checkbox" checked>HA</label></div><div class="r"><label class="o k"><input type="radio" name="b4">CLAVC</label><label class="o"><input type="checkbox" checked>HA</label></div>
      </div>
      <div class="grp short" role="group" aria-label="VC-1视频解码器">
        <span class="lg">VC-1视频解码器</span><span></span><label class="o h"><input type="radio" name="b5">禁用</label>
        <div class="r"><label class="o k"><input type="radio" name="b5">WMVideo</label><label class="o"><input type="checkbox" checked>HA</label></div><div class="r"><label class="o k"><input type="radio" name="b5" checked>MPCVideo</label><label class="o"><input type="checkbox" checked>HA</label></div><div class="r"><label class="o k"><input type="radio" name="b5">CLVC1</label><label class="o"><input type="checkbox">HA</label></div>
      </div>
      <div class="split tall">
        <div class="box" role="group" aria-label="Avi分离器"><span class="lg">Avi分离器</span><label class="o"><input type="radio" name="b6" checked>System</label><label class="o"><input type="radio" name="b6">Haali</label><label class="o"><input type="radio" name="b6">Gabest</label></div>
        <div class="box mid loose" role="group" aria-label="XviD/DivX解码器"><span class="lg">XviD/DivX解码器</span><label class="o k"><input type="radio" name="b7" checked>Xvid &amp; DivX</label><div class="r"><label class="o"><input type="radio" name="b7">ffdshow</label><label class="o"><input type="checkbox">D</label></div></div>
        <div class="box end" role="group" aria-label="字幕"><label class="o h"><input type="radio" name="b8" checked>禁用</label><label class="o k"><input type="radio" name="b8">VS239字幕</label><label class="o k"><input type="radio" name="b8">VS233字幕</label><label class="o"><input type="checkbox">AllPlayers</label></div>
      </div>
      <div class="split">
        <div class="box" role="group" aria-label="Mkv分离器"><span class="lg">Mkv分离器</span><label class="o k"><input type="radio" name="b9" checked>Haali</label><label class="o"><input type="radio" name="b9">Gabest</label></div>
        <div class="box mid" role="group" aria-label="AAC/FLAC解码器"><span class="lg">AAC/FLAC解码器</span><label class="o k"><input type="radio" name="b10" checked>AAC &amp; FLAC</label><label class="o"><input type="radio" name="b10">ffdshow</label></div>
        <div class="box end" role="group" aria-label="Mp4/Mov分离器"><span class="lg">Mp4/Mov分离器</span><label class="o"><input type="radio" name="b11">Haali</label><label class="o"><input type="radio" name="b11" checked>NDigital</label></div>
      </div>
      <div class="low">
        <div class="box pl" role="group" aria-label="我的播放器"><span class="lg k">我的播放器</span><label class="o"><input type="radio" name="b12">MPlayerc</label><label class="o"><input type="radio" name="b12" checked>KMPlayer</label><label class="o"><input type="radio" name="b12">WMPlayer</label></div>
        <div class="outs">
          <div class="top"><label class="o"><input type="checkbox" checked disabled>自动视频渲染</label><label class="o"><input type="checkbox" checked>修复撕裂</label></div>
          <label class="o"><input type="checkbox">倍线</label><label class="k" for="w1">视频输出</label><select id="w1"><option>覆盖合成器--推荐</option></select>
          <label class="o"><input type="checkbox">SPDIF</label><label class="k" for="w2">音频输出</label><select id="w2"><option>2/0/0: &nbsp;立体声</option></select>
          <label class="o"><input type="checkbox">自动</label><label class="k" for="w3">解码模式</label><select id="w3"><option>ATI解码 DXVA模式</option></select>
        </div>
      </div>
      <div class="btns"><button type="button">确定</button><button type="button">刷新</button><button type="button">应用</button><button type="button">取消</button></div>
    </form>
  </div>
</main>

<footer class="status">
  <i></i><i></i><i></i><i></i><i></i>
  <div class="zone"><svg class="i16" viewBox="0 0 20 20"><use href="#globe"/></svg><b>Internet</b></div>
  <div class="zoom"><svg class="i16" viewBox="0 0 16 16"><use href="#lens"/><path d="M6.500 3.500V8.500M4 6H9" stroke="#1b5ea8" stroke-width="1.500"/></svg><b>100%</b><i class="tri s"></i></div>
  <div class="mark"><svg viewBox="0 0 44 34"><use href="#jdlogo" width="120" height="34"/></svg><span>家电论坛<small>JD-BBS.COM</small></span></div>
</footer>
</body>
</html>
```
FILE: styles.css
```css
* { box-sizing: border-box; }
html, body { height: 100%; }
body {
  margin: 0;
  display: flex;
  flex-direction: column;
  overflow: hidden;
  background: #ece9d8;
  color: #000;
  font-family: "Liberation Sans", "Noto Sans CJK SC", sans-serif;
  font-size: 12px;
}
.defs { position: absolute; width: 0; height: 0; }
h1, h2, h3, p, ul, dl, dd { margin: 0; padding: 0; }
ul { list-style: none; }
a { color: inherit; text-decoration: none; }
button { margin: 0; padding: 0; border: 0; background: none; font: inherit; color: inherit; }
input { min-width: 0; font: inherit; }
svg { flex: none; display: block; }
.i9 { width: 9px; height: 16px; }
.i16 { width: 16px; height: 16px; }
.i18 { width: 18px; height: 18px; }
.i20 { width: 20px; height: 20px; }
.i22 { width: 22px; height: 20px; }
.ball { width: 14px; height: 18px; }
.tri { flex: none; width: 10px; height: 5px; background: #000; clip-path: polygon(0 0, 100% 0, 50% 100%); }
.tri.s { width: 6px; height: 3px; }
.tri.w { background: #fff; width: 8px; height: 4px; }
.tri.dim { background: #b5b3aa; }
.drop {
  flex: none;
  width: 20px;
  align-self: stretch;
  margin: 1px;
  border-radius: 2px;
  background: linear-gradient(#dbe6fe, #b3c8f8);
  display: flex;
  align-items: center;
  justify-content: center;
}
.drop::before {
  content: "";
  width: 6px;
  height: 6px;
  border: solid #4d6185;
  border-width: 0 2px 2px 0;
  transform: translateY(-2px) rotate(45deg);
}

/* Window caption */
.titlebar {
  flex: none;
  height: 36px;
  display: flex;
  align-items: center;
  gap: 4px;
  padding: 0 2px 0 3px;
  background: linear-gradient(#9db9f2, #7b96e0 20%, #7f9be4 60%, #83a6ec 90%, #7087c8);
}
.titlebar h1 {
  flex: 1;
  min-width: 0;
  overflow: hidden;
  white-space: pre;
  font: 22px/36px "Liberation Serif", "Noto Sans CJK SC", serif;
  color: #dce7fb;
}
.titlebar h1 b { font: 20px/36px "Liberation Mono", monospace; }
.winbtns { display: flex; gap: 4px; }
.winbtns button {
  width: 30px;
  height: 30px;
  border: 1px solid #c6d4f6;
  border-radius: 4px;
  background: linear-gradient(135deg, #5e86ea, #2c57d0);
}
.winbtns .red { background: linear-gradient(135deg, #d98b92, #a84c5c); }

/* Address row */
.field { display: flex; align-items: center; background: #fff; border: 1px solid #7f9db9; }
.field input { flex: 1; width: 0; border: 0; padding: 0; background: none; outline: 0; }
.field input::placeholder { color: #8b8b8b; opacity: 1; }
.address {
  flex: none;
  height: 32px;
  display: flex;
  align-items: center;
  gap: 5px;
  padding: 0 6px 0 5px;
  background: linear-gradient(90deg, #eef0f4, #ece9dc);
}
.address .nav { width: 54px; height: 26px; }
.address .tri { width: 8px; height: 4px; margin: 0 5px 0 2px; }
.address .tri.s { width: 6px; height: 3px; margin: 0; background: #2a4c8c; }
.url { flex: 1; height: 26px; padding-left: 3px; gap: 4px; }
.url input { font: 13px "Liberation Mono", monospace; }
.find { width: 195px; height: 26px; padding-left: 4px; margin-left: 4px; font-size: 16px; }
.sq {
  width: 21px;
  height: 22px;
  border: 1px solid #b9bfcc;
  border-radius: 3px;
  background: linear-gradient(#fff, #dfe3ee);
}
.sq.go { width: 34px; display: flex; align-items: center; gap: 4px; }
.sq.go svg { width: 20px; border-right: 1px solid #b9bfcc; }

/* Menu and third-party toolbars */
.bars {
  flex: none;
  border-top: 1px solid #a6a496;
  border-bottom: 1px solid #a6a496;
  background: linear-gradient(90deg, #f3f3f0, #f0eee4 40%, #ece9d4);
}
.menu { height: 28px; display: flex; align-items: center; gap: 16px; padding: 0 0 3px 10px; font-size: 16px; line-height: 24px; color: #9d9a8c; }
.menu b, .cmds b { font: 13px "Liberation Mono", monospace; }
.baidu {
  height: 20px;
  display: grid;
  align-items: center;
  white-space: nowrap;
  font-size: 16px;
  line-height: 20px;
  grid-template-columns: 66px 13px 243px 12px 19px 46px 17px 8px 27px 27px 28px 26px 13px 19px 46px 22px 18px 46px 20px 31px 15px 26px 20px;
  padding-left: 4px;
}
.baidu .field { width: 240px; height: 20px; border-bottom: 0; }
.baidu .field input { font-size: 16px; padding-left: 48px; }
.bang { margin-left: 3px; width: 15px; background: #ffc832; border: 1px solid #b03a10; color: #a02008; font-size: 12px; line-height: 14px; text-align: center; }
.zhi { color: #d8660a; font-weight: bold; }
.bdlogo { display: flex; align-items: center; color: #de1f16; font-weight: bold; font-size: 12px; }
.bdlogo svg { width: 14px; height: 16px; fill: #2a32d8; }
.vsep { width: 1px; height: 18px; background: #b9b6a6; }
.alcohol {
  height: 29px;
  display: grid;
  align-items: center;
  white-space: nowrap;
  font-size: 11px;
  grid-template-columns: 14px 16px 129px 13px 203px 20px 24px 12px 28px 24px 18px 16px 25px 39px 14px 24px 57px 147px 22px 15px 36px 38px 26px 33px 29px 55px 15px 26px 36px 12px 23px 15px 24px 73px 15px 18px 1fr 10px 17px;
  padding: 0 11px 1px 6px;
}
.vsep.last { grid-column: 38; }
.alcohol .field { width: 200px; height: 24px; gap: 2px; padding-left: 3px; }
.alcohol .diz { width: 36px; height: 20px; }
.plus { width: 13px; height: 14px; border: 1px solid #8d95a6; border-radius: 2px; background: #fff; line-height: 12px; text-align: center; font-weight: bold; color: #555; }
.plus.big { width: 17px; height: 17px; line-height: 15px; background: #f1f2f6; }
.alc { font-size: 15px; font-weight: bold; font-style: italic; color: #3c2a7c; line-height: 16px; }
.alc em { background: #3c2a7c; color: #fff; padding: 0 2px; }
.player {
  width: 138px;
  height: 20px;
  display: flex;
  align-items: center;
  gap: 2px;
  padding: 0 3px;
  border-radius: 10px;
  background: linear-gradient(#6f7688, #a8aebb);
  color: #fff;
}
.player span { flex: 1; background: #7c8393; font-size: 10px; line-height: 16px; }
.player button { width: 15px; height: 15px; border-radius: 8px; background: #e6ebf6; border: 1px solid #39425c; color: #222b48; font-size: 8px; line-height: 12px; text-align: center; }

/* Tab row */
.tabs {
  flex: none;
  height: 37px;
  display: flex;
  align-items: flex-end;
  gap: 9px;
  padding-left: 5px;
  border-bottom: 1px solid #6f7486;
  background: linear-gradient(#c2cbea, #c2cbea) 0 100% / 100% 5px no-repeat, linear-gradient(90deg, #f3f3f0, #f0eee4 40%, #ece9d4);
  font-size: 16px;
}
.tabs > svg { margin-bottom: 12px; }
.strip { flex: 1; display: flex; padding-left: 6px; }
.tab {
  height: 31px;
  padding: 0 3px 8px;
  display: flex;
  align-items: center;
  gap: 4px;
  border: 1px solid #8f95a8;
  border-bottom: 0;
  border-radius: 4px 4px 0 0;
  background: linear-gradient(#fbfbfd, #d9dcea);
  white-space: nowrap;
}
.tab b { font: 16px "Liberation Serif", serif; }
.tab span { flex: 1; text-align: left; line-height: 22px; }
.tab strong { padding-right: 4px; color: #888; font-size: 14px; }
.tab.quick { width: 24px; }
.tab.quick svg { width: 16px; height: 14px; }
.tab.mini { width: 14px; }
.tab.page { width: 179px; }
.tab.on { background: linear-gradient(#fff, #cfe0fb 70%, #c2cbea); }
.tab.new { width: 30px; }
.cmds {
  align-self: flex-start;
  height: 32px;
  width: 355px;
  display: grid;
  align-items: center;
  white-space: nowrap;
  line-height: 22px;
  grid-template-columns: 30px 17px 30px 17px 30px 11px 22px 62px 16px 20px 62px 21px 12px;
}
.cmds .tri:not(.s) { width: 9px; }
.cmds .more { font-size: 14px; align-self: start; }

/* Browser viewport */
.pane {
  flex: 1;
  min-height: 0;
  position: relative;
  display: flex;
  background: #fff;
  border-left: 2px solid #77766a;
}
.pane::before { content: ""; width: 11px; background: linear-gradient(90deg, #f4f4f0, #dfe5ea 60%, #c9d4e0); border-right: 1px solid #55606c; }
.sheet { flex: 1; display: flex; flex-direction: column; margin: 0 10px 0 8px; }
.post { flex: 1; min-height: 0; display: flex; border: 2px solid #6b93b4; border-top: 0; }
.next { height: 3px; margin-top: 8px; border: 1px solid #9fb4c4; border-bottom: 2px solid #111; }
.gut { width: 10px; border-left: 2px solid #5b6674; background: #d4dfe9; }
.scroll {
  width: 23px;
  padding: 2px 4px 1px 2px;
  display: grid;
  grid-template-rows: 19px 136px 222px 1fr 19px;
  background: linear-gradient(90deg, #e9edf0, #f6f5f0 30%, #fdfdfb 80%, #e6e3d2 85%);
}
.scroll button, .thumb { border: 1px solid #fff; border-radius: 2px; background: linear-gradient(90deg, #cbd8fb, #b9cafa); box-shadow: 1px 1px 0 #9aaedb; }
.scroll button svg { width: 10px; height: 7px; margin: auto; }
.scroll button:last-child { grid-row: 5; }
.thumb { grid-row: 3; display: grid; place-items: center; }
.thumb::before { content: ""; width: 7px; height: 7px; background: repeating-linear-gradient(#eef3ff 0 1px, #8ca4e0 1px 2px, transparent 2px 3px); }

.user { width: 190px; background: linear-gradient(90deg, #e2effb, #eaf4fe); padding: 0 4px 0 6px; }
.cut { height: 11px; overflow: hidden; border-bottom: 1px solid #a9c7dc; display: flex; align-items: flex-end; line-height: 16px; padding: 0 5px 3px; }
.user .cut { font-weight: bold; }
.user .cut i { width: 6px; height: 6px; margin: 0 0 4px 4px; border: 1px solid #5bb0d8; transform: rotate(45deg); }
.avatar { width: 108px; height: 108px; margin: 4px 0 0 30px; }
.rank { display: block; margin: 3px 0 0 8px; line-height: 18px; color: #1a4a7c; }
.stars { display: flex; gap: 2px; margin: 0 0 0 10px; }
.stars svg { width: 14px; height: 16px; }
.user dl { margin: 10px 0 0 8px; line-height: 19px; color: #556; }
.user dl div { display: flex; gap: 7px; }
.user dd { color: #222; }
.links { display: grid; grid-template-columns: 22px 59px 20px auto; align-items: center; margin: 5px 0 0 8px; line-height: 19px; color: #222; }
.links svg { width: 14px; height: 14px; }
.online { color: #1a4a8c; }

.main { flex: 1; min-width: 0; display: flex; flex-direction: column; padding: 0 2px 0 0; }
.main .cut { color: #666; }
.main .cut a { color: #1a4a8c; margin-left: 20px; }
.text { padding: 6px 0 0 11px; font-size: 14px; line-height: 22px; }
.text h2 { font-size: 15px; line-height: 22px; margin-bottom: 5px; }
.text u { text-decoration: none; border-bottom: 1px solid #e05050; }
.in { padding-left: 31px; }
.text ul { padding-left: 16px; line-height: 17px; color: #c8282c; }
.text ul li:first-child { line-height: 22px; }
.tail { padding-left: 8px; line-height: 20px; }
.smile { display: flex; align-items: center; line-height: 32px; }
.smile svg { width: 20px; height: 20px; margin-bottom: 8px; }
.text h3 { width: 500px; height: 26px; padding-left: 10px; border-top: 1px solid #9fbcd4; background: linear-gradient(#eef4fc, #fff); font-size: 13px; line-height: 28px; }
.file { display: flex; align-items: center; gap: 8px; height: 18px; margin: 9px 0 0 2px; font-size: 12px; color: #666; }
.file strong { font-size: 13px; color: #222; }
.file svg { width: 14px; height: 14px; }
.date { padding-left: 21px; font-size: 12px; line-height: 14px; color: #999; }
.rule { width: 500px; height: 9px; border-bottom: 1px dashed #a6c6d8; }
.sig { width: 480px; height: 20px; margin: 20px 0 0 2px; display: flex; justify-content: space-between; align-items: flex-end; background: linear-gradient(90deg, #111 5px, transparent 5px) 10px 100% / 8px 1px repeat-x; }
.sig svg { width: 16px; height: 16px; }
.sig span { font: bold 12px/17px "Liberation Serif", serif; color: #555; padding-right: 6px; }
.gear { margin-top: 6px; font-size: 12px; line-height: 20px; color: #666; }
.main footer { margin-top: auto; height: 32px; display: flex; align-items: center; justify-content: flex-end; gap: 7px; padding: 0 12px 4px 0; border-top: 1px solid #a9c4d4; background: #f3f8fd; color: #222; }

/* Decoder dialog: layout shared by both skins */
.dlg { font: 12px/16px "Liberation Serif", "Noto Sans CJK SC", serif; }
.cap { display: flex; align-items: center; }
.cap .ar { width: 16px; height: 14px; }
.form { position: relative; width: 344px; display: flex; flex-direction: column; }
.o { display: flex; align-items: center; gap: 2px; height: 16px; white-space: nowrap; justify-self: start; }
.o input { appearance: none; flex: none; width: 13px; height: 13px; margin: 0; background: var(--in); border: 1px solid var(--line); }
.o input[type="radio"] { border-radius: 50%; }
.o input[type="radio"]:checked { background: radial-gradient(circle, var(--dot) 0 2px, var(--in) 4px); }
.o input[type="checkbox"]:checked {
  background: var(--in);
  display: grid;
  place-items: center;
}
.o input[type="checkbox"]:checked::before { content: ""; width: 4px; height: 8px; border: solid var(--tick); border-width: 0 2px 2px 0; transform: translateY(-1px) rotate(40deg); }
.o input:disabled { border-color: #c9c7ba; }
.o input[type="checkbox"]:disabled::before { border-color: #bbb; }
.o:has(:disabled) { color: #aca899; }
.k { color: var(--blue); }
.r { display: flex; gap: 2px; }
.lg { color: var(--legend); z-index: 1; justify-self: start; align-self: flex-start; padding-right: 4px; background: var(--bg); white-space: nowrap; }
.lg.k { color: var(--blue); }
.h { z-index: 1; padding-right: 4px; background: var(--bg); }
.grp, .box { position: relative; }
.grp::before, .box::before { content: ""; position: absolute; inset: 8px 0 4px; border: 1px solid var(--frame); border-radius: 4px; }
.grp > *, .box > * { position: relative; }
.grp { display: grid; grid-template-columns: 127px 124px auto; grid-template-rows: 18px 16px 16px; height: 56px; padding-left: 8px; }
.grp.short { grid-template-rows: 18px 16px; height: 46px; }
.split { display: grid; grid-template-columns: 119px 121px auto; height: 56px; }
.split.tall { height: 70px; }
.box { display: grid; grid-auto-rows: 16px; grid-template-rows: 18px; padding-left: 8px; }
.box.loose { grid-auto-rows: 22px; align-items: center; }
.split .box:first-child::before { right: 7px; }
.box.mid > :not(.lg) { margin-left: 8px; }
.box.end > .o { margin-left: 11px; }
.low { display: flex; justify-content: space-between; }
.box.pl { width: 83px; height: 88px; grid-template-rows: 22px; grid-auto-rows: 20px; }
.outs { width: 257px; display: grid; grid-template-columns: 51px 51px 155px; grid-template-rows: 14px; grid-auto-rows: 24px; align-items: center; white-space: nowrap; }
.outs .top { grid-column: 1 / -1; display: grid; grid-template-columns: 124px auto; padding-left: 48px; }
.outs select { height: 20px; width: 155px; padding: 0 20px 2px 2px; appearance: none; border: 1px solid #7f9db9; font: inherit; color: #000; border-radius: 0; }
.btns { display: flex; justify-content: space-between; padding: 4px 1px 0 0; }
.btns button { width: 71px; height: 23px; border: 1px solid; border-radius: 3px; }
.reg { position: absolute; z-index: 2; top: -7px; left: 306px; }

.vista {
  --bg: #f2f2f2; --in: #f4f4f4; --line: #8e8f8f; --dot: #123a55; --tick: #3a4a8c; --blue: #101078; --legend: #000; --frame: #d5dbe0;
  position: relative;
  width: 363px;
  margin-left: 21px;
  border-left: 2px solid #5c6874;
  background: var(--bg);
}
.vista .cap { height: 25px; gap: 6px; padding: 0 3px 0 3px; background: linear-gradient(100deg, #cdd8e6, #dbe6f1 30%, #c6d4e4 55%, #dfe9f2); border-bottom: 1px solid #6d8296; font: bold 13px "Noto Sans CJK SC", sans-serif; color: #97a0aa; }
.vista .ar { color: #111; }
.vista .cap button { align-self: flex-start; width: 43px; height: 15px; margin-left: auto; border: 1px solid #5b6b7c; border-top: 0; border-radius: 0 0 4px 4px; background: #d8e2ec; }
.vista .cap svg:not(.ar) { width: 12px; height: 10px; margin: auto; }
.vista .form { margin: 7px 0 0 9px; }
.vista .o input { box-shadow: inset 0 0 0 1px #e2e2e2; }
.vista .btns button { border-color: #8a8a8a; background: linear-gradient(#f4f4f4, #e8e8e8 50%, #d4d4d4 51%, #d8d8d8); }
.vista select { border-color: #a8acb2; background: url("data:image/svg+xml,%3Csvg xmlns='http://www.w3.org/2000/svg' width='7' height='4'%3E%3Cpath d='M0 0H7L3.5 4Z'/%3E%3C/svg%3E") no-repeat right 5px center #fff; }
.edge { height: 13px; margin-left: -2px; border-bottom: 4px solid #4a6070; }

.xp {
  --bg: #ece9d8; --in: #fdfdfb; --line: #1c5180; --dot: #21a121; --tick: #21a121; --blue: #0a0ac8; --legend: #1046b8; --frame: #d0d0bf;
  position: absolute;
  left: 775px;
  top: 137px;
  width: 366px;
  border: 3px solid #0a3fd0;
  border-top: 0;
  border-radius: 8px 8px 0 0;
  background: var(--bg);
}
.xp .cap { height: 39px; margin: 0 -3px; padding: 0 5px 0 4px; gap: 6px; border-radius: 8px 8px 0 0; background: linear-gradient(#0a5ae0, #3a94ff 8%, #0454e6 20%, #0558ee 70%, #0666fa 90%, #0440c0); font: 21px "Noto Sans CJK SC", sans-serif; color: #fff; text-shadow: 1px 1px #123c90; }
.xp .ar { color: #001a50; }
.xp .cap button { width: 31px; height: 31px; margin-left: auto; border: 1px solid #fff; border-radius: 4px; background: linear-gradient(135deg, #f0937a, #d94a22); }
.xp .cap button svg { width: 29px; height: 29px; }
.xp .form { margin: 6px 0 8px 8px; }
.xp .reg span { outline: 1px dotted #000; outline-offset: -2px; }
.xp select { background: url("data:image/svg+xml,%3Csvg xmlns='http://www.w3.org/2000/svg' width='18' height='16'%3E%3Crect width='18' height='16' rx='2' fill='%23c1d2fb'/%3E%3Cpath d='M5 6L9 10L13 6' fill='none' stroke='%234d6185' stroke-width='2.500'/%3E%3C/svg%3E") no-repeat right 1px center #fff; }
.xp .btns button { border-color: #003c74; background: linear-gradient(#fff, #f0efe8 85%, #d8d0c0); }

/* Forum logo laid over the page */
.mark { position: absolute; left: 4px; bottom: 4px; display: flex; color: #1b6eb8; filter: drop-shadow(0 0 1px #fff); }
.mark svg { width: 44px; height: 34px; }
.mark span { margin-left: -3px; padding-top: 2px; font: italic bold 19px/20px "Noto Sans CJK SC", sans-serif; }
.mark small { display: block; font: bold 10px/12px "Liberation Sans", sans-serif; color: #2f7fc4; text-align: center; }
.vista .mark { left: 2px; }

/* Status bar */
.status {
  flex: none;
  height: 23px;
  position: relative;
  display: flex;
  justify-content: flex-end;
  align-items: stretch;
  border-top: 1px solid #a6a496;
  border-bottom: 2px solid #3f7fc8;
  background: linear-gradient(#fbfaf4, #ece9d8 4px);
}
.status > i { width: 24px; border-left: 1px solid #cfccbc; }
.zone, .zoom { display: flex; align-items: center; gap: 6px; border-left: 1px solid #cfccbc; padding: 3px 0 0 5px; }
.zone { width: 181px; }
.zone b, .zoom b { font: 13px "Liberation Mono", monospace; }
.zoom { width: 114px; padding-left: 12px; gap: 0; }
.zoom b { margin-right: 20px; }
.status .mark { bottom: 2px; }
```
